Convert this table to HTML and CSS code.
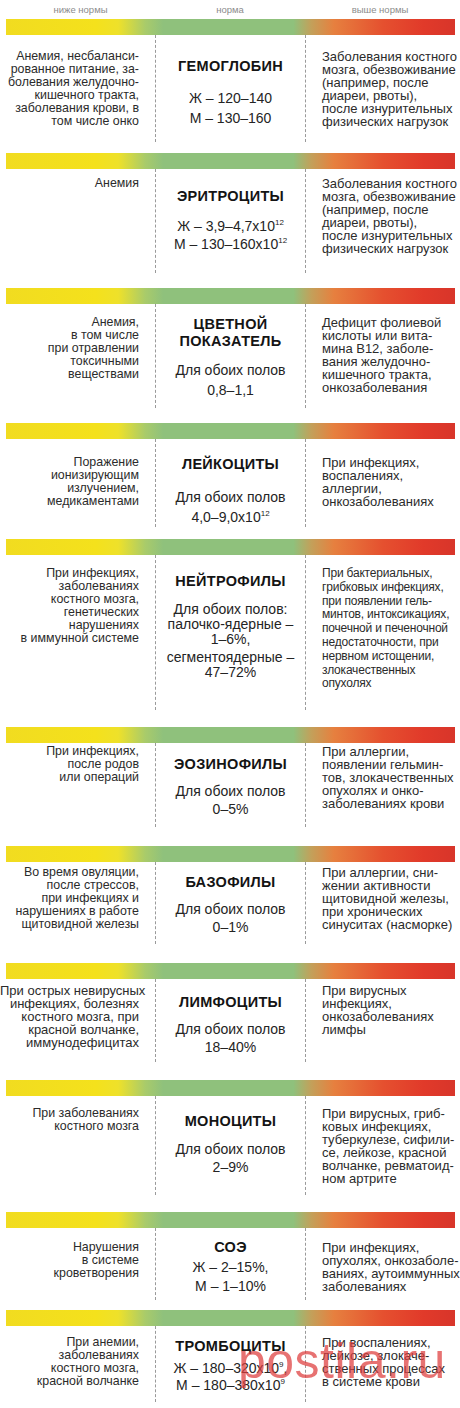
FILE: index.html
```html
<!DOCTYPE html>
<html lang="ru">
<head>
<meta charset="utf-8">
<title>Анализ крови</title>
<link rel="stylesheet" href="styles.css">
</head>
<body>
<div class="page">
  <div class="legend">
    <span>ниже нормы</span>
    <span>норма</span>
    <span>выше нормы</span>
  </div>

  <section class="block r1">
    <div class="bar"></div>
    <div class="row">
      <div class="low">Анемия, несбаланси-<br>рованное питание, за-<br>болевания желудочно-<br>кишечного тракта,<br>заболевания крови, в<br>том числе онко</div>
      <div class="norm"><h2>ГЕМОГЛОБИН</h2><p>Ж – 120–140<br>М – 130–160</p></div>
      <div class="high">Заболевания костного<br>мозга, обезвоживание<br>(например, после<br>диареи, рвоты),<br>после изнурительных<br>физических нагрузок</div>
    </div>
  </section>

  <section class="block r2">
    <div class="bar"></div>
    <div class="row">
      <div class="low">Анемия</div>
      <div class="norm"><h2>ЭРИТРОЦИТЫ</h2><p>Ж – 3,9–4,7x10<sup>12</sup><br>М – 130–160x10<sup>12</sup></p></div>
      <div class="high">Заболевания костного<br>мозга, обезвоживание<br>(например, после<br>диареи, рвоты),<br>после изнурительных<br>физических нагрузок</div>
    </div>
  </section>

  <section class="block r3">
    <div class="bar"></div>
    <div class="row">
      <div class="low">Анемия,<br>в том числе<br>при отравлении<br>токсичными<br>веществами</div>
      <div class="norm"><h2>ЦВЕТНОЙ<br>ПОКАЗАТЕЛЬ</h2><p>Для обоих полов<br>0,8–1,1</p></div>
      <div class="high">Дефицит фолиевой<br>кислоты или вита-<br>мина В12, заболе-<br>вания желудочно-<br>кишечного тракта,<br>онкозаболевания</div>
    </div>
  </section>

  <section class="block r4">
    <div class="bar"></div>
    <div class="row">
      <div class="low">Поражение<br>ионизирующим<br>излучением,<br>медикаментами</div>
      <div class="norm"><h2>ЛЕЙКОЦИТЫ</h2><p>Для обоих полов<br>4,0–9,0x10<sup>12</sup></p></div>
      <div class="high">При инфекциях,<br>воспалениях,<br>аллергии,<br>онкозаболеваниях</div>
    </div>
  </section>

  <section class="block r5">
    <div class="bar"></div>
    <div class="row">
      <div class="low">При инфекциях,<br>заболеваниях<br>костного мозга,<br>генетических<br>нарушениях<br>в иммунной системе</div>
      <div class="norm"><h2>НЕЙТРОФИЛЫ</h2><p class="dense">Для обоих полов:<br>палочко-ядерные –<br>1–6%,</p><p class="dense second">сегментоядерные –<br>47–72%</p></div>
      <div class="high loose">При бактериальных,<br>грибковых инфекциях,<br>при появлении гель-<br>минтов, интоксикациях,<br>почечной и печеночной<br>недостаточности, при<br>нервном истощении,<br>злокачественных<br>опухолях</div>
    </div>
  </section>

  <section class="block r6">
    <div class="bar"></div>
    <div class="row">
      <div class="low">При инфекциях,<br>после родов<br>или операций</div>
      <div class="norm"><h2>ЭОЗИНОФИЛЫ</h2><p>Для обоих полов<br>0–5%</p></div>
      <div class="high">При аллергии,<br>появлении гельмин-<br>тов, злокачественных<br>опухолях и онко-<br>заболеваниях крови</div>
    </div>
  </section>

  <section class="block r7">
    <div class="bar"></div>
    <div class="row">
      <div class="low">Во время овуляции,<br>после стрессов,<br>при инфекциях и<br>нарушениях в работе<br>щитовидной железы</div>
      <div class="norm"><h2>БАЗОФИЛЫ</h2><p>Для обоих полов<br>0–1%</p></div>
      <div class="high">При аллергии, сни-<br>жении активности<br>щитовидной железы,<br>при хронических<br>синуситах (насморке)</div>
    </div>
  </section>

  <section class="block r8">
    <div class="bar"></div>
    <div class="row">
      <div class="low wide">При острых невирусных<br>инфекциях, болезнях<br>костного мозга, при<br>красной волчанке,<br>иммунодефицитах</div>
      <div class="norm"><h2>ЛИМФОЦИТЫ</h2><p>Для обоих полов<br>18–40%</p></div>
      <div class="high">При вирусных<br>инфекциях,<br>онкозаболеваниях<br>лимфы</div>
    </div>
  </section>

  <section class="block r9">
    <div class="bar"></div>
    <div class="row">
      <div class="low">При заболеваниях<br>костного мозга</div>
      <div class="norm"><h2>МОНОЦИТЫ</h2><p>Для обоих полов<br>2–9%</p></div>
      <div class="high">При вирусных, гриб-<br>ковых инфекциях,<br>туберкулезе, сифили-<br>се, лейкозе, красной<br>волчанке, ревматоид-<br>ном артрите</div>
    </div>
  </section>

  <section class="block r10">
    <div class="bar"></div>
    <div class="row">
      <div class="low">Нарушения<br>в системе<br>кроветворения</div>
      <div class="norm"><h2>СОЭ</h2><p>Ж – 2–15%,<br>М – 1–10%</p></div>
      <div class="high">При инфекциях,<br>опухолях, онкозаболе-<br>ваниях, аутоиммунных<br>заболеваниях</div>
    </div>
  </section>

  <section class="block r11">
    <div class="bar"></div>
    <div class="row">
      <div class="low">При анемии,<br>заболеваниях<br>костного мозга,<br>красной волчанке</div>
      <div class="norm"><h2>ТРОМБОЦИТЫ</h2><p>Ж – 180–320x10<sup>9</sup>,<br>М – 180–380x10<sup>9</sup></p></div>
      <div class="high">При воспалениях,<br>лейкозе, злокаче-<br>ственных процессах<br>в системе крови</div>
    </div>
  </section>

  <div class="watermark">postila.ru</div>
</div>
</body>
</html>
```

FILE: styles.css
```css
* { box-sizing: border-box; }

html, body {
  margin: 0;
  padding: 0;
  background: #ffffff;
}

body {
  font-family: "Liberation Sans", Arial, sans-serif;
  color: #2e2e2e;
}

.page {
  position: relative;
  width: 460px;
  height: 1408px;
  overflow: hidden;
}

.legend {
  display: grid;
  grid-template-columns: 155px 150px 1fr;
  height: 19px;
  padding-right: 5px;
  font-size: 9.5px;
  line-height: 19px;
  color: #8c8c8c;
  text-align: center;
}

.legend span:first-child { padding-left: 6px; }

.block {
  --ps: 12px;
  --pc: 14px;
  --gap: 16px;
  --tm: 10px;
  --vl: 19px;
  --h: 118px;
}

.bar {
  height: 16px;
  margin: 0 5px 0 6px;
  background: linear-gradient(to right,
    #f1dc20 0%,
    #f4e11c 20%,
    #eee12a 25%,
    #a9cb6a 31%,
    #8fc17c 35%,
    #8fc17c 64%,
    #c3a05a 68%,
    #e6803f 73%,
    #e5502f 84%,
    #e13a2a 93%,
    #d8352a 100%);
}

.row {
  display: grid;
  grid-template-columns: 155px 150px 1fr;
  height: var(--h);
  padding-bottom: var(--gap);
}

.low, .high {
  font-size: 13px;
  line-height: 13px;
  white-space: nowrap;
  padding-top: var(--ps);
  color: #2b2b2b;
}

.low {
  font-size: 12.4px;
  text-align: right;
  padding-right: 16px;
}

.low.wide { font-size: 13px; }

.high {
  padding-left: 16px;
  border-left: 1px dashed #9a9a9a;
}

.norm {
  border-left: 1px dashed #9a9a9a;
  text-align: center;
  padding-top: var(--pc);
  white-space: nowrap;
}

.norm h2 {
  margin: 0 0 var(--tm);
  font-size: 14.5px;
  line-height: 17px;
  font-weight: bold;
  color: #141414;
  letter-spacing: 0.3px;
}

.norm p {
  margin: 0;
  font-size: 14px;
  line-height: var(--vl);
  color: #242424;
}

.norm p.dense { line-height: 15px; }
.norm p.second { margin-top: 3px; }

.high.loose { line-height: 13.8px; font-size: 12px; letter-spacing: -0.2px; }

sup {
  font-size: 8px;
  line-height: 0;
  vertical-align: 6px;
}

.r1 { --h: 118px; --ps: 15px; --pc: 23px; --gap: 11px; --tm: 13px; --vl: 20px; }
.r2 { --h: 119px; --ps: 8px;  --pc: 19px; --gap: 15px; --tm: 12px; --vl: 18px; }
.r3 { --h: 119px; --ps: 12px; --pc: 12px; --gap: 15px; --tm: 10px; --vl: 20px; }
.r4 { --h: 100px; --ps: 17px; --pc: 17px; --gap: 16px; --tm: 14px; --vl: 20px; }
.r5 { --h: 172px; --ps: 12px; --pc: 18px; --gap: 17px; --tm: 12px; }
.r6 { --h: 103px; --ps: 2px;  --pc: 13px; --gap: 19px; --tm: 9px;  --vl: 18px; }
.r7 { --h: 101px; --ps: 4px;  --pc: 12px; --gap: 19px; --tm: 9px;  --vl: 18px; }
.r8 { --h: 101px; --ps: 5px;  --pc: 15px; --gap: 18px; --tm: 9px;  --vl: 18px; }
.r9 { --h: 116px; --ps: 11px; --pc: 17px; --gap: 17px; --tm: 10px; --vl: 18px; }
.r10 { --h: 82px; --ps: 13px; --pc: 11px; --gap: 10px; --tm: 2px;  --vl: 19px; }
.r11 { --h: 82px; --ps: 10px; --pc: 12px; --gap: 6px;  --tm: 5px;  --vl: 17px; }

.watermark {
  position: absolute;
  left: 238px;
  top: 1331px;
  font-family: "Liberation Sans", Arial, sans-serif;
  font-size: 50px;
  line-height: 60px;
  color: rgba(222, 60, 60, 0.72);
  letter-spacing: 0.5px;
  pointer-events: none;
}
```
